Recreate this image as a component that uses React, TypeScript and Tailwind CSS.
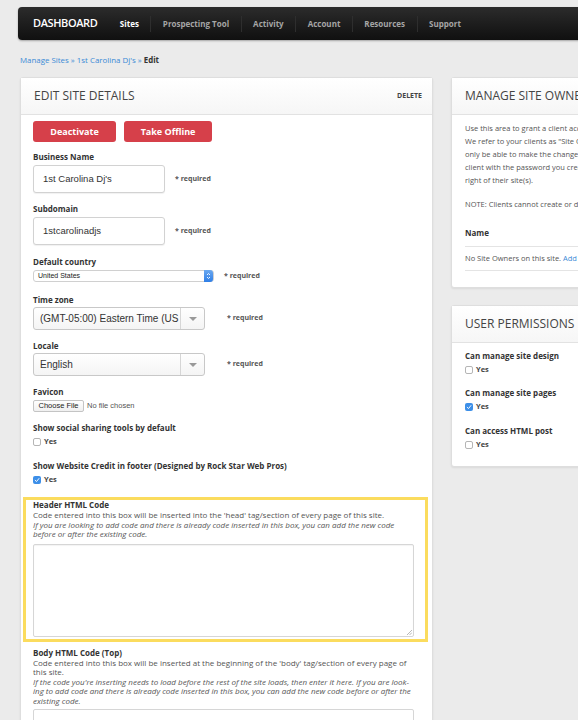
import React from 'react';

const navItems = ['Sites', 'Prospecting Tool', 'Activity', 'Account', 'Resources', 'Support'];

const Checkbox: React.FC<{ checked?: boolean }> = ({ checked = false }) => {
  if (checked) {
    return (
      <span className="flex h-[8px] w-[8px] items-center justify-center rounded-[2px] bg-[#3d8fe8]">
        <svg width="6" height="6" viewBox="0 0 10 10" fill="none">
          <path d="M2 5.5 L4.2 7.6 L8.2 2.6" stroke="white" strokeWidth="1.6" strokeLinecap="round" strokeLinejoin="round" />
        </svg>
      </span>
    );
  }
  return <span className="block h-[8px] w-[8px] rounded-[2px] border border-[#b5b5b5] bg-white" />;
};

const YesBox: React.FC<{ checked?: boolean; className?: string }> = ({ checked, className = '' }) => (
  <div className={`flex h-[12px] items-center gap-[3px] ${className}`}>
    <Checkbox checked={checked} />
    <span className="text-[7.5px] font-bold text-[#444]">Yes</span>
  </div>
);

const Label: React.FC<{ children: React.ReactNode; className?: string }> = ({ children, className = '' }) => (
  <div className={`text-[8px] font-bold leading-[12px] text-[#333] ${className}`}>{children}</div>
);

const Required: React.FC<{ className?: string }> = ({ className = '' }) => (
  <span className={`text-[7px] font-bold text-[#555] ${className}`}>* required</span>
);

const Dropdown: React.FC<{ value: string }> = ({ value }) => (
  <div className="flex h-[23px] w-[172px] items-center overflow-hidden rounded-[3px] border border-[#c8c8c8] bg-gradient-to-b from-white to-[#f4f4f4] font-['Liberation_Sans',Arial,sans-serif]">
    <span className="flex-1 whitespace-nowrap pl-[6px] text-[10px] text-[#333]">{value}</span>
    <span className="flex h-full w-[24px] items-center justify-center border-l border-[#d6d6d6]">
      <svg width="8" height="4" viewBox="0 0 8 4">
        <path d="M0 0 H8 L4 4 Z" fill="#999" />
      </svg>
    </span>
  </div>
);

const PanelHeader: React.FC<{ title: string; right?: React.ReactNode }> = ({ title, right }) => (
  <div className="flex h-[37px] items-center justify-between border-b border-[#e2e2e2] bg-gradient-to-b from-white to-[#f6f6f6] px-[13px]">
    <span className="whitespace-nowrap text-[12px] text-[#444]">{title}</span>
    {right}
  </div>
);

export default function App() {
  return (
    <div className="h-[720px] w-[578px] overflow-hidden bg-[#ebebeb] font-['Open_Sans',sans-serif]">
      {/* top navigation */}
      <div className="pt-[7px] pl-[18px]">
        <div className="flex h-[33px] w-[600px] items-center rounded-[4px] bg-gradient-to-b from-[#2c2c2c] to-[#101010] pl-[15px] shadow-[0_1px_2px_rgba(0,0,0,0.3)]">
          <span className="mr-[11px] text-[11px] font-semibold tracking-[-0.4px] text-white">DASHBOARD</span>
          {navItems.map((item, i) => (
            <React.Fragment key={item}>
              {i > 0 && <span className="h-[16px] w-px bg-[#2e2e2e]" />}
              <span className={`px-[11.5px] text-[8px] font-bold ${i === 0 ? 'text-white' : 'text-[#a5a5a5]'}`}>{item}</span>
            </React.Fragment>
          ))}
        </div>
      </div>

      {/* breadcrumb */}
      <div className="mt-[14px] pl-[20px] text-[7.9px] leading-[12px] text-[#3a8ad6]">
        Manage Sites » 1st Carolina Dj's » <span className="font-bold text-[#333]">Edit</span>
      </div>

      <div className="mt-[11px] flex items-start pl-[20px]">
        {/* left panel */}
        <div className="w-[413px] shrink-0 rounded-[3px] border border-[#dedede] bg-white shadow-[0_1px_2px_rgba(0,0,0,0.08)]">
          <PanelHeader title="EDIT SITE DETAILS" right={<span className="mr-[-3px] text-[7px] font-bold text-[#444]">DELETE</span>} />
          <div className="px-[12px] pb-[20px]">
            <div className="mt-[6px] flex gap-[8px]">
              <button className="h-[21px] w-[83px] rounded-[3px] bg-[#d6404a] text-[9px] font-bold text-white">Deactivate</button>
              <button className="h-[21px] w-[88px] rounded-[3px] bg-[#d6404a] text-[9px] font-bold text-white">Take Offline</button>
            </div>

            <Label className="mt-[9px]">Business Name</Label>
            <div className="mt-[2px] flex items-center">
              <div className="flex h-[28px] w-[132px] items-center rounded-[3px] border border-[#d2d2d2] bg-white pl-[9px] font-['Liberation_Sans',Arial,sans-serif] text-[9.5px] text-[#333] shadow-[0_1px_1px_rgba(0,0,0,0.06)]">1st Carolina Dj's</div>
              <Required className="ml-[10px]" />
            </div>

            <Label className="mt-[10px]">Subdomain</Label>
            <div className="mt-[2px] flex items-center">
              <div className="flex h-[28px] w-[132px] items-center rounded-[3px] border border-[#d2d2d2] bg-white pl-[9px] font-['Liberation_Sans',Arial,sans-serif] text-[9.5px] text-[#333] shadow-[0_1px_1px_rgba(0,0,0,0.06)]">1stcarolinadjs</div>
              <Required className="ml-[10px]" />
            </div>

            <Label className="mt-[11px]">Default country</Label>
            <div className="mt-[2px] flex items-center">
              <div className="flex h-[12px] w-[181px] items-center justify-between rounded-[3px] border border-[#d0d0d0] bg-white pl-[4px] font-['Liberation_Sans',Arial,sans-serif] text-[7px] text-[#222]">
                <span>United States</span>
                <span className="flex h-[12px] w-[9px] flex-col items-center justify-center rounded-r-[3px] bg-gradient-to-b from-[#6aa8f0] to-[#2e7ee6]">
                  <svg width="5" height="8" viewBox="0 0 5 8" fill="none">
                    <path d="M1 3 L2.5 1.5 L4 3 M1 5 L2.5 6.5 L4 5" stroke="white" strokeWidth="0.9" />
                  </svg>
                </span>
              </div>
              <Required className="ml-[10px]" />
            </div>

            <Label className="mt-[12px]">Time zone</Label>
            <div className="mt-[1px] flex items-center">
              <Dropdown value="(GMT-05:00) Eastern Time (US" />
              <Required className="ml-[22px]" />
            </div>

            <Label className="mt-[10px]">Locale</Label>
            <div className="mt-[1px] flex items-center">
              <Dropdown value="English" />
              <Required className="ml-[22px]" />
            </div>

            <Label className="mt-[10px]">Favicon</Label>
            <div className="mt-[2px] flex h-[12px] items-center gap-[3px] font-['Liberation_Sans',Arial,sans-serif] text-[7.5px]">
              <span className="flex h-[12px] w-[51px] items-center justify-center rounded-[2px] border border-[#c4c4c4] bg-gradient-to-b from-white to-[#f0f0f0] text-[#222]">Choose File</span>
              <span className="text-[#555]">No file chosen</span>
            </div>

            <Label className="mt-[10px]">Show social sharing tools by default</Label>
            <YesBox className="mt-[2px]" />

            <Label className="mt-[12px]">Show Website Credit in footer (Designed by Rock Star Web Pros)</Label>
            <YesBox checked className="mt-[2px]" />

            {/* highlighted header code block */}
            <div className="mt-[11px] ml-[-10px] w-[405px] border-[3px] border-[#fbdc5e] pb-[2px] pl-[7px]">
              <div className="text-[8px] font-bold leading-[10px] text-[#333]">Header HTML Code</div>
              <div className="whitespace-nowrap text-[8px] leading-[9.5px] text-[#555]">
                Code entered into this box will be inserted into the 'head' tag/section of every page of this site.
              </div>
              <div className="whitespace-nowrap text-[8px] italic leading-[9.5px] text-[#555]">
                If you are looking to add code and there is already code inserted in this box, you can add the new code
                <br />
                before or after the existing code.
              </div>
              <div className="relative mt-[5px] h-[93px] w-[381px] rounded-[2px] border border-[#d6d6d6] bg-white shadow-[inset_0_1px_1px_rgba(0,0,0,0.05)]">
                <svg className="absolute bottom-[1px] right-[1px]" width="6" height="6" viewBox="0 0 6 6">
                  <path d="M1 6 L6 1 M3.5 6 L6 3.5" stroke="#999" strokeWidth="0.7" />
                </svg>
              </div>
            </div>

            <div className="mt-[6px] text-[8px] font-bold leading-[10px] text-[#333]">Body HTML Code (Top)</div>
            <div className="whitespace-nowrap text-[8px] leading-[9.5px] text-[#555]">
              Code entered into this box will be inserted at the beginning of the 'body' tag/section of every page of
              <br />
              this site.
            </div>
            <div className="whitespace-nowrap text-[8px] italic leading-[9.5px] text-[#555]">
              If the code you're inserting needs to load before the rest of the site loads, then enter it here. If you are look-
              <br />
              ing to add code and there is already code inserted in this box, you can add the new code before or after the
              <br />
              existing code.
            </div>
            <div className="mt-[4px] h-[93px] w-[381px] rounded-[2px] border border-[#d6d6d6] bg-white" />
          </div>
        </div>

        {/* right column */}
        <div className="ml-[18px] flex w-[260px] shrink-0 flex-col gap-[17px]">
          <div className="rounded-[3px] border border-[#dedede] bg-white pb-[16px] shadow-[0_1px_2px_rgba(0,0,0,0.08)]">
            <PanelHeader title="MANAGE SITE OWNERS" />
            <div className="px-[13px]">
              <div className="mt-[7px] whitespace-nowrap text-[7.5px] leading-[13px] text-[#555]">
                Use this area to grant a client access to their site.
                <br />
                We refer to your clients as "Site Owners". Site Owners will
                <br />
                only be able to make the changes you permit. Provide your
                <br />
                client with the password you create and they can log in
                <br />
                right of their site(s).
              </div>
              <div className="mt-[11px] whitespace-nowrap text-[7.5px] leading-[13px] text-[#555]">
                NOTE: Clients cannot create or delete sites.
              </div>
              <div className="mt-[9px] flex h-[27px] items-center border-b border-[#e4e4e4] text-[8px] font-bold text-[#333]">Name</div>
              <div className="flex h-[24px] items-center whitespace-nowrap border-b border-[#e4e4e4] text-[7.5px] text-[#555]">
                No Site Owners on this site.&nbsp;<span className="text-[#3a8ad6]">Add one</span>
              </div>
            </div>
          </div>

          <div className="rounded-[3px] border border-[#dedede] bg-white pb-[15px] shadow-[0_1px_2px_rgba(0,0,0,0.08)]">
            <PanelHeader title="USER PERMISSIONS" />
            <div className="px-[13px]">
              <Label className="mt-[7px]">Can manage site design</Label>
              <YesBox className="mt-[2px]" />
              <Label className="mt-[11px]">Can manage site pages</Label>
              <YesBox checked className="mt-[2px]" />
              <Label className="mt-[12px]">Can access HTML post</Label>
              <YesBox className="mt-[2px]" />
            </div>
          </div>
        </div>
      </div>
    </div>
  );
}
